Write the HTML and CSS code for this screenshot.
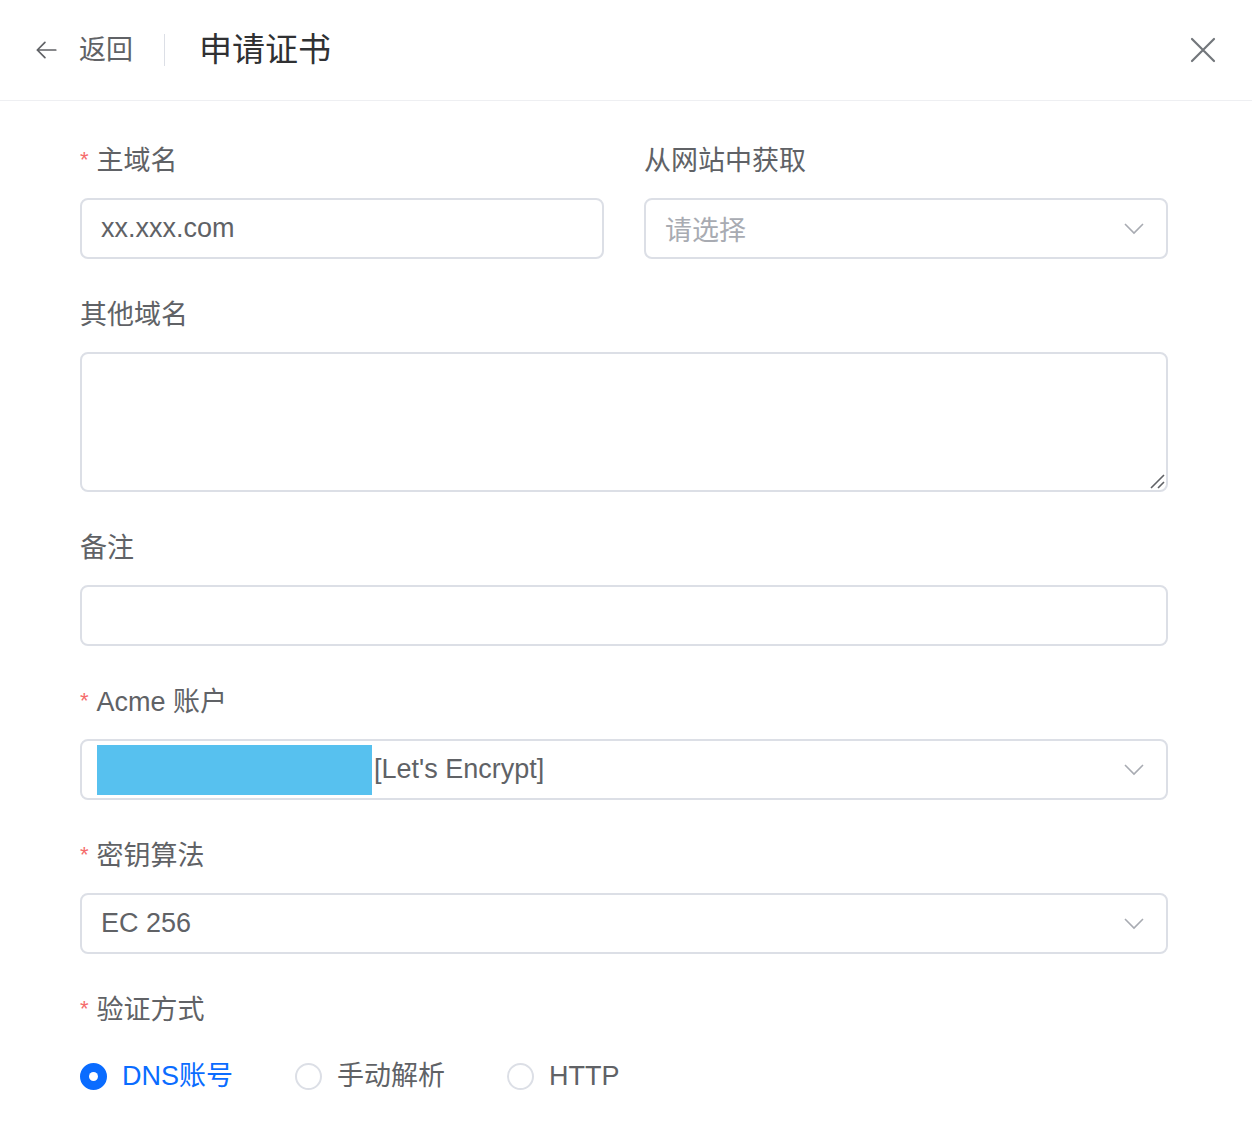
FILE: index.html
```html
<!DOCTYPE html>
<html lang="zh-CN">
<head>
<meta charset="utf-8">
<title>申请证书</title>
<link rel="stylesheet" href="styles.css">
</head>
<body>
<div class="drawer">
  <header class="header">
    <div class="back">
      <svg class="back-icon" viewBox="0 0 24 24" width="26" height="26"><path d="M21 12H4M11 5l-7 7 7 7" fill="none" stroke="#606266" stroke-width="1.6" stroke-linecap="round" stroke-linejoin="round"/></svg>
      <span class="back-text">返回</span>
    </div>
    <span class="sep"></span>
    <h1 class="title">申请证书</h1>
    <svg class="close" viewBox="0 0 26 26" width="26" height="26"><path d="M2 2L24 24M24 2L2 24" stroke="#72767b" stroke-width="2.2" stroke-linecap="round"/></svg>
  </header>

  <form class="form">
    <div class="row">
      <div class="item">
        <label class="label"><span class="req">*</span>主域名</label>
        <div class="input"><span class="value">xx.xxx.com</span></div>
      </div>
      <div class="item">
        <label class="label">从网站中获取</label>
        <div class="input select"><span class="placeholder">请选择</span><svg class="arrow" viewBox="0 0 20 12" width="20" height="12"><path d="M1 1l9 9 9-9" fill="none" stroke="#a8abb2" stroke-width="1.6"/></svg></div>
      </div>
    </div>

    <div class="item">
      <label class="label">其他域名</label>
      <div class="textarea">
        <svg class="resize" viewBox="0 0 16 16" width="16" height="16"><path d="M2 15L15 2M9 15L15 9" stroke="#606266" stroke-width="1.6"/></svg>
      </div>
    </div>

    <div class="item">
      <label class="label">备注</label>
      <div class="input"></div>
    </div>

    <div class="item">
      <label class="label"><span class="req">*</span>Acme 账户</label>
      <div class="input select acme"><span class="mask"></span><span class="value">[Let's Encrypt]</span><svg class="arrow" viewBox="0 0 20 12" width="20" height="12"><path d="M1 1l9 9 9-9" fill="none" stroke="#a8abb2" stroke-width="1.6"/></svg></div>
    </div>

    <div class="item">
      <label class="label"><span class="req">*</span>密钥算法</label>
      <div class="input select"><span class="value">EC 256</span><svg class="arrow" viewBox="0 0 20 12" width="20" height="12"><path d="M1 1l9 9 9-9" fill="none" stroke="#a8abb2" stroke-width="1.6"/></svg></div>
    </div>

    <div class="item last">
      <label class="label"><span class="req">*</span>验证方式</label>
      <div class="radios">
        <span class="radio checked"><span class="dot"></span><span class="rtext">DNS账号</span></span>
        <span class="radio"><span class="dot"></span><span class="rtext">手动解析</span></span>
        <span class="radio"><span class="dot"></span><span class="rtext">HTTP</span></span>
      </div>
    </div>
  </form>
</div>
</body>
</html>
```

FILE: styles.css
```css
* { box-sizing: border-box; }
html, body { margin: 0; padding: 0; background: #fff; }
body {
  font-family: "Liberation Sans", "Noto Sans CJK SC", sans-serif;
  color: #606266;
}
.drawer { width: 1252px; }
.header {
  height: 101px;
  border-bottom: 1px solid #eeeff2;
  display: flex;
  align-items: center;
  padding: 0 36px 0 33px;
}
.back { display: flex; align-items: center; gap: 20px; }
.back-icon { display: block; }
.back-text { font-size: 27px; color: #606266; line-height: 36px; }
.sep {
  width: 1px; height: 32px; background: #dcdfe6;
  margin: 0 34px 0 31px;
}
.title {
  margin: 0; font-weight: normal;
  font-size: 33px; color: #303133; line-height: 40px;
  flex: 1;
}
.close { display: block; }
.form { padding: 42px 84px 0 80px; }
.row { display: flex; gap: 40px; }
.row .item { flex: 1; }
.item { margin-bottom: 38px; }
.label {
  display: block;
  height: 36px;
  font-size: 27px;
  line-height: 36px;
  color: #606266;
  margin-bottom: 19px;
  white-space: nowrap;
}
.req { color: #f56c6c; font-size: 22px; margin-right: 8px; position: relative; top: -3px; }
.input {
  height: 61px;
  border: 2px solid #dcdfe6;
  border-radius: 8px;
  display: flex;
  align-items: center;
  padding: 0 22px 0 19px;
  font-size: 27px;
}
.value { color: #606266; }
.placeholder { color: #a8abb2; }
.select .arrow { margin-left: auto; display: block; }
.acme { padding-left: 15px; }
.mask {
  display: block;
  width: 275px; height: 50px;
  background: #57c1ef;
  margin-right: 2px;
}
.textarea {
  height: 140px;
  border: 2px solid #dcdfe6;
  border-radius: 8px;
  position: relative;
}
.resize { position: absolute; right: 1px; bottom: 1px; }
.item.last { margin-bottom: 0; }
.item.last .label { margin-bottom: 28px; }
.radios { display: flex; align-items: center; height: 40px; }
.radio { display: flex; align-items: center; margin-right: 62px; }
.dot {
  width: 27px; height: 27px;
  border: 2px solid #dcdfe6;
  border-radius: 50%;
  margin-right: 15px;
  position: relative;
  flex-shrink: 0;
}
.checked .dot { background: #0a6cff; border-color: #0a6cff; }
.checked .dot::after {
  content: "";
  position: absolute; left: 50%; top: 50%;
  width: 9px; height: 9px; margin: -4.5px 0 0 -4.5px;
  background: #fff; border-radius: 50%;
}
.rtext { font-size: 27px; color: #606266; line-height: 36px; }
.checked .rtext { color: #0a6cff; }
```
